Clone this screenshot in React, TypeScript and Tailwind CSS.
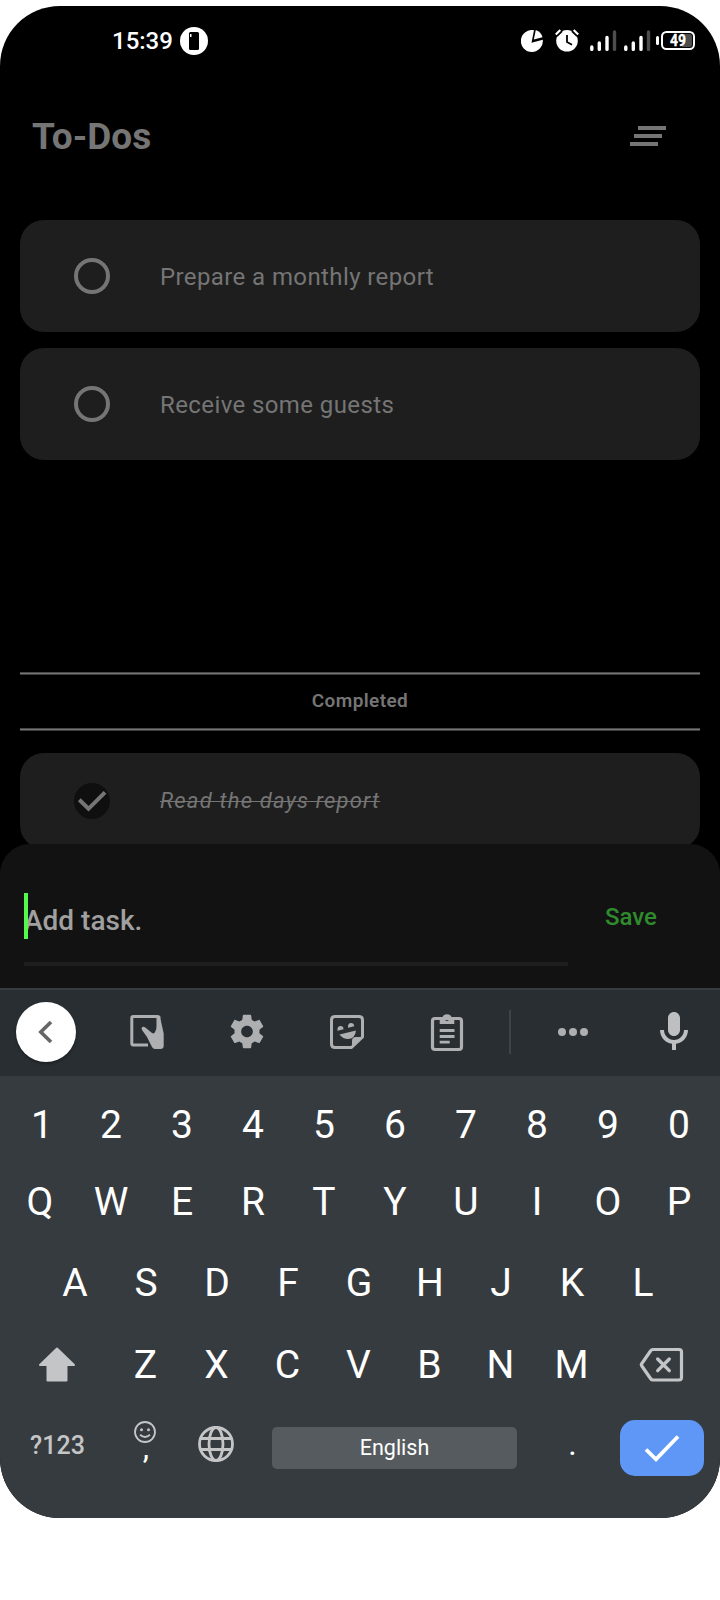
import type { ReactNode } from "react";

function Key({ children, className = "" }: { children: ReactNode; className?: string }) {
  return <div className={`flex w-[71px] items-center justify-center ${className}`}>{children}</div>;
}

function LetterRow({ letters, className = "" }: { letters: string; className?: string }) {
  return (
    <div className={`flex justify-center text-[39px] leading-[46px] text-white ${className}`}>
      {letters.split("").map((l) => (
        <Key key={l} className={l === "1" ? "pl-[4px]" : ""}>
          {l}
        </Key>
      ))}
    </div>
  );
}

function Signal() {
  return (
    <svg width="28" height="22" viewBox="0 0 28 22" fill="none" strokeWidth="3.4" strokeLinecap="round">
      <path d="M1.8 17v2.4M9.3 13v6.4M17 7.5v11.9" stroke="#fff" />
      <path d="M24.5 2v17.4" stroke="#4d4d4d" />
    </svg>
  );
}

function StatusBar() {
  return (
    <div className="flex h-[70px] items-center pl-[112px] pr-[25px] text-white">
      <span className="text-[24px] font-medium leading-[28px]">15:39</span>
      <svg className="ml-[7px]" width="28" height="28" viewBox="0 0 28 28">
        <circle cx="14" cy="14" r="14" fill="#fff" />
        <rect x="9" y="5" width="10" height="18" rx="1.5" fill="#000" />
        <path d="M10 7h1.5v3h-1.5z" fill="#fff" />
      </svg>
      <div className="ml-auto flex items-center">
        <svg className="mb-px" width="22" height="22" viewBox="0 0 22 22" fill="#fff">
          <path d="M13 .2A11 11 0 1 0 21.800 9.800L10.500 12.800Z" />
          <path d="M14.800 0L12.800 9.500L21.500 7.300A10.500 10.500 0 0 0 14.800 0Z" />
        </svg>
        <svg className="mb-px ml-[12px]" width="24" height="23" viewBox="0 0 24 23" fill="none">
          <circle cx="12" cy="11.800" r="10.800" fill="#fff" />
          <path d="M.8 6L6 1M23.200 6L18 1" stroke="#000" strokeWidth="5" />
          <path d="M.8 5.500L5.300 1M23.200 5.500L18.700 1" stroke="#fff" strokeWidth="2.200" />
          <path d="M12 6v7l5 2.800" stroke="#000" strokeWidth="1.800" />
        </svg>
        <div className="ml-[11px] flex gap-[6px]">
          <Signal />
          <Signal />
        </div>
        <svg className="ml-[4px]" width="39" height="20" viewBox="0 0 39 20">
          <rect x="0" y="5" width="3" height="9" rx="1.500" fill="#fff" />
          <rect x="6" y="1" width="32" height="17" rx="4.500" fill="none" stroke="#fff" strokeWidth="2" />
          <path d="M26 3h7.500q2.500 0 2.500 2.500v8q0 2.500-2.500 2.500h-7.500z" fill="#4d4d4d" />
          <text x="22" y="15.300" textAnchor="middle" fontSize="16.500" fontWeight="700" fill="#fff" stroke="#fff" strokeWidth="0.300" textLength="16" lengthAdjust="spacingAndGlyphs">49</text>
        </svg>
      </div>
    </div>
  );
}

function Task({ text }: { text: string }) {
  return (
    <div className="flex h-[112px] items-center rounded-[24px] bg-[#1e1e1e] pl-[54px]">
      <div className="size-9 rounded-full border-4 border-[#757575]" />
      <span className="ml-[50px] pt-[2px] text-[24px] leading-[28px] tracking-[0.4px] text-[#757575]">{text}</span>
    </div>
  );
}

function Rule() {
  return (
    <div className="flex h-[3px] shrink-0 flex-col">
      <div className="h-px bg-[#484848]" />
      <div className="h-px bg-[#757575]" />
      <div className="h-px bg-[#3c3c3c]" />
    </div>
  );
}

function Toolbar() {
  return (
    <div className="flex h-[86px] items-center bg-[#292e32] pb-[3px] pl-4 text-[#adafb1]">
      <div className="flex size-[60px] shrink-0 items-center justify-center rounded-full bg-white shadow-[0_2px_3px_rgba(0,0,0,0.3)]">
        <svg width="24" height="24" viewBox="0 0 24 24" fill="none" stroke="#666" strokeWidth="3.600">
          <path d="M17 2L6.800 12L17 22" />
        </svg>
      </div>
      <svg className="ml-[51px]" width="40" height="40" viewBox="0 0 40 40">
        <path d="M21 33H6.300Q4.800 33 4.800 31.500V6Q4.800 4.500 6.300 4.500H30.500Q32 4.500 32 6" fill="none" stroke="currentColor" strokeWidth="3" />
        <path d="M29.500 4H33L34.500 11.500L36.700 21.500V33.500Q36.700 37 33.500 37H28Q26 37 25 35L20 25L15.200 18.300Q13.800 16 15.200 15Q16.600 14.200 18 15.300L25 21Q27.500 22.500 28.500 19Q29.500 17 29.500 14Z" fill="currentColor" />
      </svg>
      <svg className="ml-[60px]" width="40" height="41" viewBox="0 0 24 24" fill="currentColor">
        <path d="M19.430 12.980c.04-.32.07-.64.07-.98s-.03-.66-.07-.98l2.110-1.650c.19-.15.24-.42.12-.64l-2-3.460c-.12-.22-.39-.3-.61-.22l-2.490 1c-.52-.4-1.080-.73-1.690-.98l-.38-2.650C14.460 2.180 14.250 2 14 2h-4c-.25 0-.46.18-.49.42l-.38 2.650c-.61.25-1.170.59-1.690.98l-2.490-1c-.23-.09-.49 0-.61.22l-2 3.460c-.13.22-.07.49.12.64l2.110 1.650c-.04.32-.07.65-.07.98s.03.66.07.98l-2.110 1.650c-.19.15-.24.42-.12.64l2 3.460c.12.22.39.3.61.22l2.490-1c.52.4 1.080.73 1.690.98l.38 2.650c.03.24.24.42.49.42h4c.25 0 .46-.18.49-.42l.38-2.650c.61-.25 1.170-.59 1.690-.98l2.490 1c.23.09.49 0 .61-.22l2-3.460c.12-.22.07-.49-.12-.64zM12 15.500c-1.930 0-3.500-1.570-3.500-3.500s1.570-3.500 3.500-3.500 3.500 1.570 3.500 3.500-1.570 3.500-3.500 3.500" />
      </svg>
      <svg className="ml-[60px]" width="40" height="40" viewBox="0 0 40 40" fill="currentColor">
        <path d="M24.500 35.500H8Q4.500 35.500 4.500 32V8Q4.500 4.500 8 4.500H32Q35.500 4.500 35.500 8V25Z" fill="none" stroke="currentColor" strokeWidth="3" strokeLinejoin="round" />
        <path d="M25 36V29Q25 25 29 25H36Z" />
        <path d="M12.500 22.500L29 18.500Q28 27 21 27Q16 27 12.500 22.500Z" />
        <path d="M10.500 18.800Q10 14 13.500 14Q16.400 14 16.600 17.200ZM21 15.800Q20.600 11 24 11Q27 11 27.200 14.200Z" />
      </svg>
      <svg className="ml-[60px]" width="40" height="40" viewBox="0 0 40 40">
        <rect x="5.500" y="6.500" width="29" height="31" rx="2.500" fill="none" stroke="currentColor" strokeWidth="3.200" />
        <path fillRule="evenodd" d="M12.700 12V5.500H15.300A5 5 0 0 1 24.700 5.500H27.300V12ZM20 5a2 2 0 1 0 0 4a2 2 0 1 0 0-4Z" fill="currentColor" />
        <path d="M12.700 18.500H27.500M12.700 24.500H27.500M12.700 30.200H22.700" stroke="currentColor" strokeWidth="2.800" />
      </svg>
      <div className="ml-[42px] h-[44px] w-[2px] bg-[#3e4347]" />
      <svg className="ml-[42px]" width="40" height="40" viewBox="0 0 40 40" fill="currentColor">
        <circle cx="9" cy="20" r="4" />
        <circle cx="20" cy="20" r="4" />
        <circle cx="31" cy="20" r="4" />
      </svg>
      <svg className="ml-[57px] shrink-0" width="48" height="48" viewBox="0 0 24 24" fill="#bdbfc1">
        <path d="M12 14c1.660 0 3-1.340 3-3V5c0-1.660-1.340-3-3-3S9 3.340 9 5v6c0 1.660 1.340 3 3 3zm5-3c0 2.760-2.240 5-5 5s-5-2.240-5-5H5c0 3.530 2.610 6.430 6 6.920V21h2v-3.080c3.390-.49 6-3.390 6-6.920h-2z" />
      </svg>
    </div>
  );
}

export default function App() {
  return (
    <div className="h-[1600px] w-[720px] bg-white pt-[6px] font-['Roboto',sans-serif]">
      <div className="flex h-[1512px] flex-col overflow-hidden rounded-[60px] bg-black">
        <StatusBar />
        <header className="flex h-[120px] shrink-0 items-center justify-between pl-8 pr-[54px]">
          <h1 className="pt-[2px] text-[37px] font-bold leading-[42px] text-[#757575]">To-Dos</h1>
          <div className="flex w-9 flex-col gap-1">
            <div className="ml-2 h-1 w-7 bg-[#757575]" />
            <div className="ml-1 h-1 w-7 bg-[#757575]" />
            <div className="h-1 w-7 bg-[#757575]" />
          </div>
        </header>
        <main className="flex h-[648px] shrink-0 flex-col px-5 pt-[24px]">
          <div className="flex flex-col gap-4">
            <Task text="Prepare a monthly report" />
            <Task text="Receive some guests" />
          </div>
          <div className="mt-[212px] flex h-[59px] shrink-0 flex-col">
            <Rule />
            <div className="flex flex-1 items-center justify-center pb-[2px] text-[19px] font-semibold leading-[24px] tracking-[0.4px] text-[#757575]">Completed</div>
            <Rule />
          </div>
          <div className="mt-[22px] flex h-24 shrink-0 items-center rounded-[24px] bg-[#1e1e1e] pl-[54px]">
            <svg width="36" height="36" viewBox="0 0 36 36">
              <circle cx="18" cy="18" r="18" fill="#0f0f0f" />
              <path d="M5.300 16.800l9.200 9L31 9.300" fill="none" stroke="#757575" strokeWidth="4" />
            </svg>
            <span className="ml-[50px] text-[22px] italic leading-[28px] tracking-[1.2px] text-[#757575] line-through decoration-1">Read the days report</span>
          </div>
        </main>
        <section className="z-10 flex h-36 shrink-0 rounded-t-[30px] bg-[#121212] pl-6">
          <div className="mt-[49px] h-[73px] w-[544px] border-b-4 border-[#1e1e1e]">
            <div className="relative h-[46px] pt-[12px] text-[28px] font-medium leading-[32px] text-[#a0a0a0]">
              <span>Add task.</span>
              <span className="absolute left-0 top-0 h-[46px] w-1 bg-[#55f94b]" />
            </div>
          </div>
          <span className="ml-[37px] mt-[59px] text-[24px] font-medium leading-[28px] text-[#2f8b2d]">Save</span>
        </section>
        <section className="flex flex-1 flex-col border-t-2 border-[#363b3f] bg-[#363b3f]">
          <Toolbar />
          <LetterRow letters="1234567890" className="mr-px mt-[26px]" />
          <LetterRow letters="QWERTYUIOP" className="mr-px mt-[31px]" />
          <LetterRow letters="ASDFGHJKL" className="mr-[2px] mt-[35px]" />
          <div className="mt-[36px] flex h-[46px] items-center pl-[4px]">
            <div className="flex w-[106px] justify-center pb-px">
              <svg width="38" height="36" viewBox="0 0 38 36" fill="#c4c5c7">
                <path d="M19 1.500L36 18H28.500V33.500H9.500V18H2Z" stroke="#c4c5c7" strokeWidth="2" strokeLinejoin="round" />
              </svg>
            </div>
            <LetterRow letters="ZXCVBNM" />
            <div className="flex w-[109px] justify-center pb-px">
              <svg width="46" height="36" viewBox="0 0 46 36" fill="none" stroke="#c4c5c7">
                <path d="M14 2.500H40Q42.500 2.500 42.500 5V30.500Q42.500 33 40 33H14Q12.500 33 11.500 31.500L2.500 18.500Q2 17.700 2.500 17L11.500 4Q12.500 2.500 14 2.500Z" strokeWidth="3.200" />
                <path d="M18.700 12L30.300 23.600M30.300 12L18.700 23.600" strokeWidth="3.400" strokeLinecap="round" />
              </svg>
            </div>
          </div>
          <div className="mt-[24px] flex h-[64px] items-center pl-[4px]">
            <div className="flex w-[106px] justify-center pl-px pt-[3px] text-[25px] font-medium leading-[30px] text-[#c4c5c7]">?123</div>
            <Key className="flex-col pb-[3px] pr-px">
              <svg width="22" height="22" viewBox="0 0 22 22" fill="none" stroke="#c4c5c7" strokeWidth="1.800">
                <circle cx="11" cy="11" r="10" />
                <path d="M6 13.800q5 4.400 10 0" />
                <circle cx="7.500" cy="8.700" r="1.500" fill="#c4c5c7" stroke="none" />
                <circle cx="14.500" cy="8.700" r="1.500" fill="#c4c5c7" stroke="none" />
              </svg>
              <span className="-mt-[7px] mb-[7px] pl-[2px] text-[32px] leading-[22px] text-white">,</span>
            </Key>
            <Key className="pr-[2px]">
              <svg width="36" height="36" viewBox="0 0 36 36" fill="none" stroke="#c4c5c7" strokeWidth="2.800">
                <circle cx="18" cy="18" r="16.500" />
                <ellipse cx="18" cy="18" rx="7" ry="16.500" />
                <path d="M3 12.500H33M3 23.500H33" />
              </svg>
            </Key>
            <div className="ml-[20px] mt-[8px] flex h-[42px] w-[245px] items-center justify-center rounded-[5px] bg-[#565b5f] pt-px text-[21.5px] text-white">English</div>
            <Key className="ml-[20px] text-[32px] leading-[36px] text-white">.</Key>
            <div className="ml-[12px] mt-[8px] flex h-[56px] w-[84px] items-center justify-center rounded-[15px] bg-[#5e97f6]">
              <svg width="36" height="28" viewBox="0 0 36 28" fill="none" stroke="#fff" strokeWidth="3.800">
                <path d="M2 15.500l10 9.800L34 2.500" />
              </svg>
            </div>
          </div>
        </section>
      </div>
    </div>
  );
}
